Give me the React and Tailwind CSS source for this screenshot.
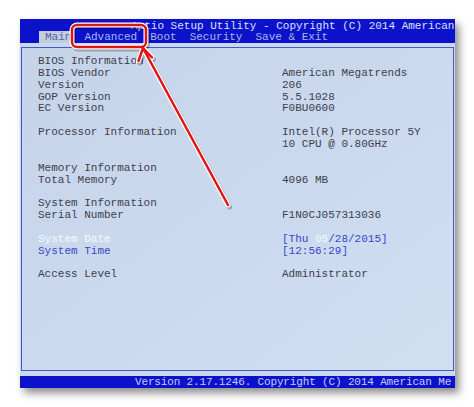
import React from 'react';

const rows = [
  ['BIOS Information', ''],
  ['BIOS Vendor', 'American Megatrends'],
  ['Version', '206'],
  ['GOP Version', '5.5.1028'],
  ['EC Version', 'F0BU0600'],
  ['', ''],
  ['Processor Information', 'Intel(R) Processor 5Y'],
  ['', '10 CPU @ 0.80GHz'],
  ['', ''],
  ['Memory Information', ''],
  ['Total Memory', '4096 MB'],
  ['', ''],
  ['System Information', ''],
  ['Serial Number', 'F1N0CJ057313036'],
  ['', ''],
  ['date', 'date'],
  ['time', 'time'],
  ['', ''],
  ['Access Level', 'Administrator'],
];

function Row({ left, right }) {
  if (left === 'date') {
    return (
      <div className="grid grid-cols-[244px_1fr] h-[11.87px] leading-[11.87px]">
        <span className="text-[#f6f8ff]">System Date</span>
        <span className="text-[#3448c8]">
          [Thu <span className="text-[#f6f8ff]">05</span>/28/2015]
        </span>
      </div>
    );
  }
  if (left === 'time') {
    return (
      <div className="grid grid-cols-[244px_1fr] h-[11.87px] leading-[11.87px]">
        <span className="text-[#3448c8]">System Time</span>
        <span className="text-[#3448c8]">[12:56:29]</span>
      </div>
    );
  }
  return (
    <div className="grid grid-cols-[244px_1fr] h-[11.87px] leading-[11.87px]">
      <span>{left || '\u00a0'}</span>
      <span>{right}</span>
    </div>
  );
}

export default function App() {
  return (
    <div className="relative w-[474px] h-[407px] bg-white overflow-hidden" style={{ fontFamily: '"Liberation Mono", monospace' }}>
      <div className="pt-[19px] pl-[20px]">
        <div className="w-[435px] h-[369px] bg-[#cad8ee] flex flex-col shadow-[4px_5px_8px_rgba(0,0,0,0.45)] text-[11px]">
          {/* header */}
          <div className="h-[24px] bg-[#0c12cc] text-[#dce2f6] overflow-hidden">
            <div className="h-[12px] leading-[12px] pt-[1px] pl-[111px] whitespace-nowrap">
              Aptio Setup Utility - Copyright (C) 2014 American
            </div>
            <div className="h-[12px] leading-[12px] flex whitespace-nowrap text-[#aab8e6]">
              <span className="ml-[19px] pl-[6px] pr-[3px] bg-[#c4cce0] text-[#5565a8]">Main</span>
              <span className="ml-[10px]">Advanced</span>
              <span className="ml-[13px]">Boot</span>
              <span className="ml-[13px]">Security</span>
              <span className="ml-[13px]">Save &amp; Exit</span>
            </div>
          </div>
          {/* panel */}
          <div className="mt-[4px] ml-[1px] mr-[1px] h-[324px] border-[1.5px] border-[#4a58c4] bg-gradient-to-br from-[#c6d4ea] to-[#d0def2] pt-[8px] pl-[16px] text-[#3c404c]">
            {rows.map((r, i) => (
              <Row key={i} left={r[0]} right={r[1]} />
            ))}
          </div>
          <div className="mt-[5px] h-[12px] bg-[#0c12cc] text-[#c4ccf2] leading-[12px] pl-[115px] tracking-[-0.15px] whitespace-nowrap overflow-hidden">
            Version 2.17.1246. Copyright (C) 2014 American Me
          </div>
        </div>
      </div>

      {/* annotation */}
      <svg className="absolute left-0 top-0" width="474" height="407" viewBox="0 0 474 407">
        <g transform="translate(1.5,2)" stroke="rgba(0,0,0,0.25)" strokeWidth="5" fill="none" strokeLinecap="round" strokeLinejoin="round">
          <rect x="72" y="25" width="74" height="22" rx="5" />
          <path d="M228 205 L143 48 M143 48 L138.5 61 M143 48 L152 57.5" />
        </g>
        <g stroke="#ffffff" strokeWidth="5" fill="none" strokeLinecap="round" strokeLinejoin="round">
          <rect x="72" y="25" width="74" height="22" rx="5" />
          <path d="M228 205 L143 48 M143 48 L138.5 61 M143 48 L152 57.5" />
        </g>
        <g stroke="#e01414" strokeWidth="2.5" fill="none" strokeLinecap="round" strokeLinejoin="round">
          <rect x="72" y="25" width="74" height="22" rx="5" />
          <path d="M228 205 L143 48 M143 48 L138.5 61 M143 48 L152 57.5" />
        </g>
      </svg>
    </div>
  );
}
